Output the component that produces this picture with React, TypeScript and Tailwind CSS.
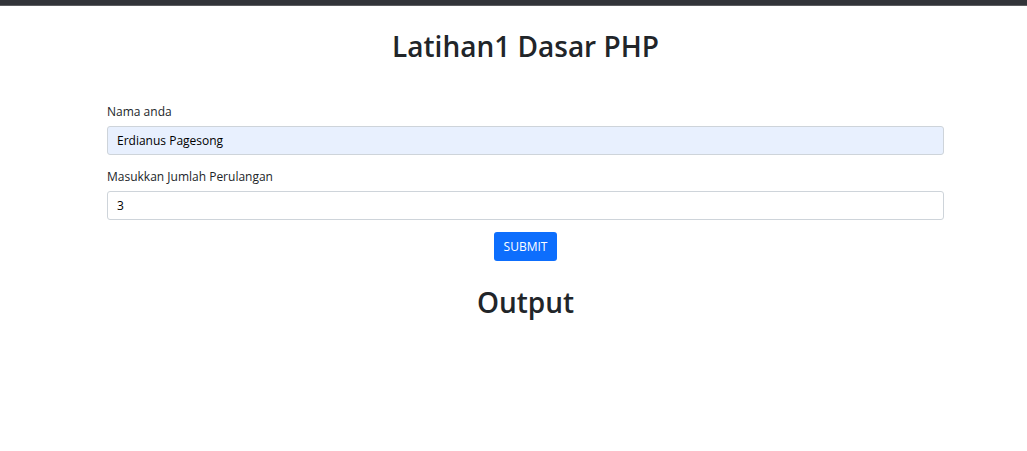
import React from 'react';

export default function App() {
  return (
    <div className="min-h-[451px] bg-white font-['Open_Sans',sans-serif] text-[#212529]">
      <div className="h-[5px] bg-[#323439] border-b border-[#5c5d60] box-content" />
      <div className="ml-[107px] w-[837px] flex flex-col">
        <h1 className="mt-[23px] text-center text-[28px] leading-[34px] font-semibold">Latihan1 Dasar PHP</h1>

        <form className="mt-[41px] flex flex-col" onSubmit={(e) => e.preventDefault()}>
          <label className="h-[16px] text-[12px] leading-[16px]">Nama anda</label>
          <input
            className="mt-[6px] h-[29px] rounded-[3px] border border-[#ced4da] bg-[#e8f0fe] px-[9px] text-[12px] text-black outline-none"
            defaultValue="Erdianus Pagesong"
          />
          <label className="mt-[14px] h-[16px] text-[12px] leading-[16px]">Masukkan Jumlah Perulangan</label>
          <input
            className="mt-[6px] h-[29px] rounded-[3px] border border-[#ced4da] bg-white px-[9px] text-[12px] text-black outline-none"
            defaultValue="3"
          />
          <div className="mt-[12px] flex justify-center">
            <button
              type="submit"
              className="h-[29px] w-[63px] rounded-[3px] bg-[#0d6efd] text-[12px] text-white"
            >
              SUBMIT
            </button>
          </div>
        </form>

        <h2 className="mt-[24px] text-center text-[28px] leading-[34px] font-semibold">Output</h2>
      </div>
    </div>
  );
}
